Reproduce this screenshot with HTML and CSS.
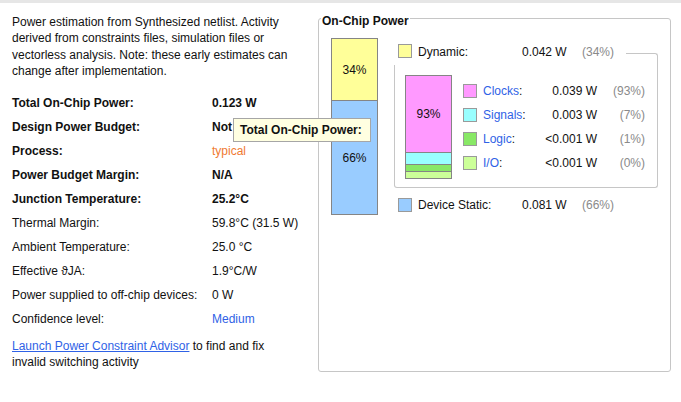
FILE: index.html
```html
<!DOCTYPE html>
<html>
<head>
<meta charset="utf-8">
<link rel="stylesheet" href="styles.css">
</head>
<body>
<div class="topbar"></div>
<div class="page">
  <section class="summary">
    <p class="intro">Power estimation from Synthesized netlist. Activity derived from constraints files, simulation files or vectorless analysis. Note: these early estimates can change after implementation.</p>
    <dl class="stats">
      <dt class="strong">Total On-Chip Power:</dt><dd class="strong">0.123 W</dd>
      <dt class="strong">Design Power Budget:</dt><dd class="strong">Not Specified</dd>
      <dt class="strong">Process:</dt><dd class="orange">typical</dd>
      <dt class="strong">Power Budget Margin:</dt><dd class="strong">N/A</dd>
      <dt class="strong">Junction Temperature:</dt><dd class="strong">25.2°C</dd>
      <dt>Thermal Margin:</dt><dd>59.8°C (31.5 W)</dd>
      <dt>Ambient Temperature:</dt><dd>25.0 °C</dd>
      <dt>Effective ϑJA:</dt><dd>1.9°C/W</dd>
      <dt>Power supplied to off-chip devices:</dt><dd>0 W</dd>
      <dt>Confidence level:</dt><dd class="blue">Medium</dd>
    </dl>
    <p class="advisor"><a href="#">Launch Power Constraint Advisor</a> to find and fix invalid switching activity</p>
  </section>
  <fieldset class="chip">
    <legend>On-Chip Power</legend>
    <div class="chip-body">
      <div class="bar main-bar">
        <div class="seg c-dyn" style="height:61px">34%</div>
        <div class="seg c-static" style="height:113px">66%</div>
      </div>
      <div class="breakdown">
        <div class="item dyn-head">
          <span class="sw c-dyn"></span>
          <span class="name">Dynamic:</span>
          <span class="val">0.042 W</span>
          <span class="pct">(34%)</span>
          <span class="head-line"></span>
        </div>
        <div class="dyn-box">
          <div class="bar sub-bar">
            <div class="seg c-clk" style="height:76px">93%</div>
            <div class="seg c-sig" style="height:11px"></div>
            <div class="seg c-logic" style="height:6px"></div>
            <div class="seg c-io" style="height:6px"></div>
          </div>
          <div class="legend-grid">
            <span class="sw c-clk"></span><span class="lbl"><a href="#">Clocks</a>:</span><span class="num">0.039 W</span><span class="num pct">(93%)</span>
            <span class="sw c-sig"></span><span class="lbl"><a href="#">Signals</a>:</span><span class="num">0.003 W</span><span class="num pct">(7%)</span>
            <span class="sw c-logic"></span><span class="lbl"><a href="#">Logic</a>:</span><span class="num">&lt;0.001 W</span><span class="num pct">(1%)</span>
            <span class="sw c-io"></span><span class="lbl"><a href="#">I/O</a>:</span><span class="num">&lt;0.001 W</span><span class="num pct">(0%)</span>
          </div>
        </div>
        <div class="item static-row">
          <span class="sw c-static"></span>
          <span class="name">Device Static:</span>
          <span class="val">0.081 W</span>
          <span class="pct">(66%)</span>
        </div>
      </div>
    </div>
  </fieldset>
</div>
<div class="tooltip">Total On-Chip Power:</div>
</body>
</html>
```
FILE: styles.css
```css
html, body {
  margin: 0;
  padding: 0;
  background: #ffffff;
}
body {
  font-family: "Liberation Sans", Arial, sans-serif;
  font-size: 12px;
  color: #111111;
  width: 681px;
  height: 402px;
  overflow: hidden;
}
.topbar {
  height: 3px;
  background: #e6e6e6;
}
.page {
  display: flex;
  align-items: flex-start;
}
.summary {
  width: 318px;
  flex: none;
  box-sizing: border-box;
  padding: 11px 0 0 12px;
}
.intro {
  margin: 0;
  width: 296px;
  line-height: 16.3px;
}
.stats {
  margin: 12px 0 0;
  display: grid;
  grid-template-columns: 200px 1fr;
  grid-auto-rows: 24px;
  line-height: 24px;
  white-space: nowrap;
}
.stats dt, .stats dd {
  margin: 0;
}
.strong { font-weight: bold; }
.orange { color: #f07a32; }
.blue { color: #2f62e6; }
.advisor {
  margin: 7px 0 0;
  width: 282px;
  line-height: 16.3px;
}
.advisor a {
  color: #2f62e6;
  text-decoration: underline;
}

/* On-Chip Power panel */
.chip {
  margin: 6px 0 0 0;
  padding: 0;
  width: 353px;
  flex: none;
  box-sizing: border-box;
  min-width: 0;
  border: 1px solid #c6c6c6;
  border-radius: 3px;
}
.chip legend {
  font-weight: bold;
  font-size: 12px;
  line-height: 14px;
  padding: 5px 1px 0;
  margin-left: 2px;
  color: #111;
}
.chip-body {
  height: 343px;
  box-sizing: border-box;
  padding: 10px 0 0 12px;
  display: flex;
  align-items: flex-start;
}
.bar {
  display: flex;
  flex-direction: column;
  border: 1px solid #858585;
  width: 45px;
}
.seg {
  display: flex;
  align-items: center;
  justify-content: center;
  line-height: 14px;
}
.seg + .seg {
  border-top: 1px solid #858585;
}
.c-dyn { background: #ffff99; }
.c-static { background: #99ccff; }
.c-clk { background: #ff99ff; }
.c-sig { background: #99ffff; }
.c-logic { background: #88e866; }
.c-io { background: #ccff99; }

.breakdown {
  margin-left: 16px;
  width: 264px;
  display: flex;
  flex-direction: column;
}
.item {
  display: flex;
  line-height: 16px;
  white-space: nowrap;
}
.sw {
  width: 14px;
  height: 14px;
  box-sizing: border-box;
  border: 1px solid #9a9a9a;
  flex: none;
}
.item .sw { margin-left: 4px; }
.item .name {
  margin-left: 6px;
  width: 104px;
}
.item .val { width: 45px; }
.item .pct {
  margin-left: 15px;
  width: 33px;
}
.pct { color: #8a8a8a; }
.dyn-head {
  margin-top: 6px;
  height: 21px;
  align-items: flex-start;
}
.head-line {
  flex: 1;
  align-self: stretch;
  margin: 9px 0 0 11px;
  border-top: 1px solid #c6c6c6;
  border-right: 1px solid #c6c6c6;
  border-top-right-radius: 3px;
}
.dyn-box {
  display: flex;
  align-items: flex-start;
  border: 1px solid #c6c6c6;
  border-top: 0;
  border-radius: 0 0 3px 3px;
  padding: 10px 0 8px 10px;
}
.legend-grid {
  margin-left: 11px;
  padding-top: 4px;
  display: grid;
  grid-template-columns: 14px 62px 58px 48px;
  grid-auto-rows: 24px;
  align-items: center;
  white-space: nowrap;
}
.lbl { padding-left: 6px; }
.lbl a {
  color: #2f62e6;
  text-decoration: none;
}
.num { text-align: right; }
.static-row {
  margin-top: 9px;
  height: 16px;
  align-items: center;
}

.tooltip {
  position: absolute;
  left: 233px;
  top: 118px;
  height: 24px;
  box-sizing: border-box;
  padding: 0 8px 0 6px;
  line-height: 22px;
  border: 1px solid #a6a6a6;
  background: #ffffe1;
  font-weight: bold;
  white-space: nowrap;
}
```
